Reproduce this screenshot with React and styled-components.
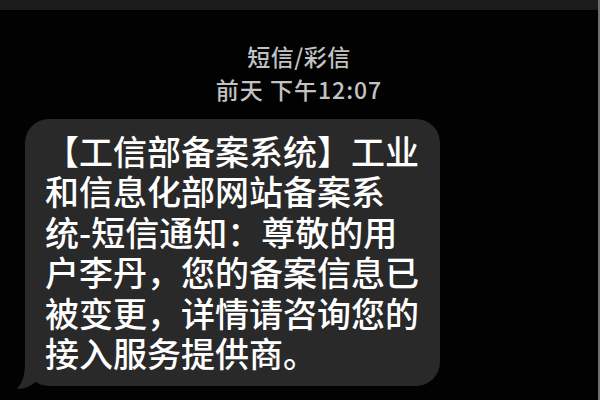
import React from 'react';
import styled, { createGlobalStyle } from 'styled-components';

const GlobalStyle = createGlobalStyle`
  html, body {
    margin: 0;
    padding: 0;
    background: #020202;
  }
  body {
    font-family: "Noto Sans CJK SC", "Noto Sans", sans-serif;
  }
`;

const lines = [
  '【工信部备案系统】工业',
  '和信息化部网站备案系',
  '统-短信通知：尊敬的用',
  '户李丹，您的备案信息已',
  '被变更，详情请咨询您的',
  '接入服务提供商。',
];

const App = () => {
  return (
    <Screen>
      <GlobalStyle />
      <TopBar />
      <Header>
        <Sender>短信/彩信</Sender>
        <Time>前天 下午12:07</Time>
      </Header>
      <Thread>
        <Bubble>
          {lines.map((line) => (
            <Line key={line}>{line}</Line>
          ))}
          <Tail viewBox="0 0 24 28" width="24" height="28">
            <path d="M8 0 C8 12 6 20 0 27 C8 27 14 24 18 20 L24 20 L24 0 Z" fill="#29292a" />
          </Tail>
        </Bubble>
      </Thread>
    </Screen>
  );
};

const Screen = styled.div`
  width: 600px;
  height: 400px;
  background: #020202;
  overflow: hidden;
  box-sizing: border-box;
  border-right: 2px solid #6e6e6e;
`;

const TopBar = styled.div`
  height: 10px;
  background: #1b1b1c;
`;

const Header = styled.div`
  display: flex;
  flex-direction: column;
  align-items: center;
  padding-top: 30px;
  color: #c2c2c2;
  font-size: 23px;
  font-weight: 500;
  line-height: 33px;
`;

const Sender = styled.div`
  letter-spacing: 0.5px;
`;

const Time = styled.div`
  letter-spacing: 1px;
`;

const Thread = styled.div`
  padding: 13px 0 0 25px;
`;

const Bubble = styled.div`
  position: relative;
  width: 415px;
  box-sizing: border-box;
  background: #29292a;
  border-radius: 24px;
  padding: 12px 0 13px 20px;
  color: #ffffff;
  font-size: 34px;
  font-weight: 500;
  line-height: 40.4px;
`;

const Line = styled.div`
  white-space: nowrap;
`;

const Tail = styled.svg`
  position: absolute;
  left: -8px;
  bottom: -4px;
`;

export default App;
